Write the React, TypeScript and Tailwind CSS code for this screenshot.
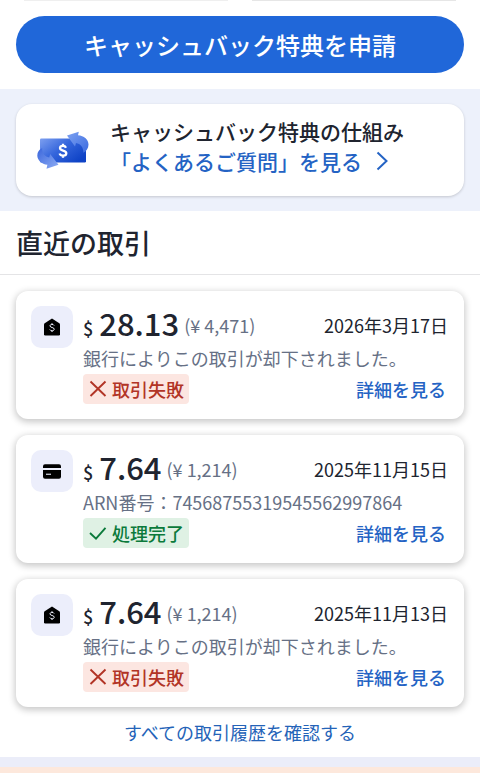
import { clsx } from "clsx";

type Transaction = {
  id: number;
  kind: "bank" | "card";
  amount: string;
  yen: string;
  date: string;
  note: string;
  failed: boolean;
};

const transactions: Transaction[] = [
  { id: 1, kind: "bank", amount: "28.13", yen: "4,471", date: "2026年3月17日", note: "銀行によりこの取引が却下されました。", failed: true },
  { id: 2, kind: "card", amount: "7.64", yen: "1,214", date: "2025年11月15日", note: "ARN番号：74568755319545562997864", failed: false },
  { id: 3, kind: "bank", amount: "7.64", yen: "1,214", date: "2025年11月13日", note: "銀行によりこの取引が却下されました。", failed: true },
];

function BankIcon() {
  return (
    <svg width="16" height="18" viewBox="0 0 16 18" aria-hidden="true">
      <path d="M8 0.5 15.3 5.2Q16 5.7 16 6.6V16.2Q16 17.5 14.7 17.5H1.3Q0 17.5 0 16.2V6.6Q0 5.7 0.7 5.2Z" fill="#000" />
      <path
        d="M10.1 7.5C9.7 6.7 9 6.4 8 6.4 6.8 6.4 6 7 6 7.9 6 10.1 10.2 8.9 10.2 11.2 10.2 12.2 9.3 12.8 8.1 12.8 7 12.8 6.2 12.3 5.8 11.5M8 5.2V6.4M8 12.8V14"
        fill="none"
        stroke="#eceefb"
        strokeWidth="1"
      />
    </svg>
  );
}

function CardIcon() {
  return (
    <svg width="18" height="15" viewBox="0 0 18 15" aria-hidden="true">
      <path d="M2 0.3H16Q18 0.3 18 2.2V4H0V2.2Q0 0.3 2 0.3Z" fill="#000" />
      <path d="M0 6H18V12.7Q18 14.7 16 14.7H2Q0 14.7 0 12.7Z" fill="#000" />
      <path d="M3 10.3H8" stroke="#b8bac6" strokeWidth="1.4" />
    </svg>
  );
}

function CashbackIcon() {
  return (
    <svg width="52" height="38" viewBox="0 0 52 38" className="shrink-0" aria-hidden="true">
      <defs>
        <linearGradient id="bill" x1="0" y1="0" x2="1" y2="0.7">
          <stop offset="0" stopColor="#7d9ff0" />
          <stop offset="0.5" stopColor="#3566dc" />
          <stop offset="1" stopColor="#0f43c6" />
        </linearGradient>
        <linearGradient id="arrowTop" x1="0" y1="0" x2="1" y2="1">
          <stop offset="0" stopColor="#7ea2f1" />
          <stop offset="1" stopColor="#3a6ae0" />
        </linearGradient>
        <linearGradient id="arrowBottom" x1="0" y1="0" x2="1" y2="1">
          <stop offset="0" stopColor="#3a66dc" />
          <stop offset="1" stopColor="#8fadf4" />
        </linearGradient>
      </defs>
      <rect x="3" y="7.5" width="46" height="24" rx="1.2" fill="url(#bill)" />
      <path d="M30 4.5 41.8 0.8 41 4.3C47 4.6 51.5 8.8 51.5 13.5 51.5 17.5 49.3 20.3 46.3 21.8 46.8 16.5 43.5 12.8 39 12L38 15.4Z" fill="url(#arrowTop)" />
      <path d="M21.5 33.8 9.5 37.8 10.4 33.8C4.6 33.2 0.3 29.2 0.3 24.5 0.3 21 2.3 18.4 5.2 17 4.9 22.5 8.2 25.8 12.2 26.4L13.2 23Z" fill="url(#arrowBottom)" />
      <path
        d="M29 16.7C28.4 15.4 27.4 14.9 26 14.9 24.1 14.9 23 15.8 23 17.1 23 20.4 29.3 18.9 29.3 22.3 29.3 23.8 28 24.7 26.1 24.7 24.4 24.7 23.1 24 22.6 22.5M26 12.8V15M26 24.5V26.7"
        fill="none"
        stroke="#fff"
        strokeWidth="2.3"
      />
    </svg>
  );
}

function StatusBadge({ failed }: { failed: boolean }) {
  return (
    <span
      className={clsx(
        "inline-flex h-[30px] items-center gap-[3px] rounded-[4px] pr-[5px] pl-1 text-[18px] font-medium",
        failed ? "bg-[#fce6e1] text-[#b23426]" : "bg-[#dff1e4] text-[#0b7a3b]"
      )}
    >
      <svg width="22" height="20" viewBox="0 0 22 20" fill="none" stroke="currentColor" strokeWidth="1.9" aria-hidden="true">
        {failed ? <path d="M3.5 2.5 18.5 17M18.5 2.5 3.5 17" /> : <path d="M3 10 9 15.6 18.5 4.8" />}
      </svg>
      {failed ? "取引失敗" : "処理完了"}
    </span>
  );
}

function TransactionCard({ item }: { item: Transaction }) {
  return (
    <li className="flex gap-[10px] rounded-xl bg-white py-[15px] pr-4 pl-[15px] shadow-[0_2px_7px_1px_rgba(0,0,0,0.22)]">
      <div className="flex size-[42px] shrink-0 items-center justify-center rounded-[10px] bg-[#eceefb]">
        {item.kind === "bank" ? <BankIcon /> : <CardIcon />}
      </div>
      <div className="min-w-0 flex-1">
        <div className="flex h-[38px] items-center gap-[5px] whitespace-nowrap text-[18px]">
          <p className="flex items-baseline gap-[6px] leading-10">
            <span className="font-medium">$</span>
            <span className="text-[31px] font-medium">{item.amount}</span>
          </p>
          <span className="text-[#667085]">(¥ {item.yen})</span>
          <time className="ml-auto">{item.date}</time>
        </div>
        <p className="whitespace-nowrap text-[18px] leading-7 text-[#667085]">{item.note}</p>
        <div className="mt-[2px] flex items-center justify-between pr-[2px]">
          <StatusBadge failed={item.failed} />
          <a href="#detail" className="text-[18px] font-medium text-[#2463c4]">
            詳細を見る
          </a>
        </div>
      </div>
    </li>
  );
}

export default function App() {
  return (
    <main className="bg-white font-['Noto_Sans_CJK_JP',sans-serif] text-[#20242f]">
      <div className="grid grid-cols-2 gap-6 px-6">
        <div className="h-px bg-[#efefef]" />
        <div className="h-px bg-[#e6e6e6]" />
      </div>

      <div className="px-4 pt-[15px] pb-4">
        <button className="h-[57px] w-full rounded-full bg-[#2067d9] text-[24px] font-medium text-white">
          キャッシュバック特典を申請
        </button>
      </div>

      <section className="bg-[#edf1fb] px-4 py-[15px]">
        <div className="flex items-center gap-[21px] rounded-2xl bg-white py-3 pl-[21px] shadow-[0_1px_3px_rgba(0,0,0,0.18)]">
          <CashbackIcon />
          <div className="pb-2 whitespace-nowrap text-[21px] leading-[30px] font-medium">
            <p>キャッシュバック特典の仕組み</p>
            <a href="#faq" className="flex items-center gap-[14px] text-[#2463c4]">
              「よくあるご質問」を見る
              <svg width="12" height="20" viewBox="0 0 12 20" fill="none" stroke="currentColor" strokeWidth="2" aria-hidden="true">
                <path d="M1.5 1.5 10.5 10 1.5 18.5" />
              </svg>
            </a>
          </div>
        </div>
      </section>

      <section>
        <h2 className="border-b border-[#e4e4e6] px-4 pt-3 pb-[11px] text-[27px] leading-10 font-medium">直近の取引</h2>
        <ul className="flex flex-col gap-4 px-4 pt-4">
          {transactions.map((item) => (
            <TransactionCard key={item.id} item={item} />
          ))}
        </ul>
        <div className="flex justify-center py-[11px]">
          <a href="#history" className="text-[18px] leading-7 text-[#2463b8]">
            すべての取引履歴を確認する
          </a>
        </div>
      </section>

      <div className="h-[10px] bg-[#ebedf9]" />
      <div className="h-[6px] bg-[#fde8dc]" />
    </main>
  );
}
